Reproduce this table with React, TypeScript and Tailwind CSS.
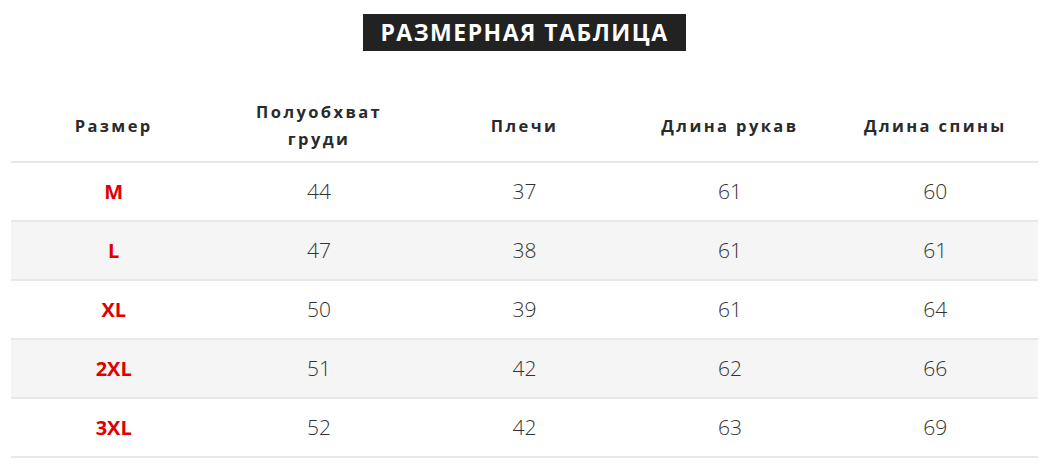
import React from "react";

const rows = [
  ["M", "44", "37", "61", "60"],
  ["L", "47", "38", "61", "61"],
  ["XL", "50", "39", "61", "64"],
  ["2XL", "51", "42", "62", "66"],
  ["3XL", "52", "42", "63", "69"],
];

const headers: React.ReactNode[] = [
  "Размер",
  <>
    Полуобхват
    <br />
    груди
  </>,
  "Плечи",
  "Длина рукав",
  "Длина спины",
];

export default function App() {
  return (
    <div className="w-[1049px] h-[474px] bg-white font-['Open_Sans',sans-serif] text-[#333]">
      <div className="flex justify-center pt-[14px]">
        <div className="bg-[#222222] text-white font-bold text-[23px] leading-[37px] h-[37px] px-[17px] tracking-[1.5px]">
          РАЗМЕРНАЯ ТАБЛИЦА
        </div>
      </div>
      <div className="mx-[11px] mt-[41px]">
        <div className="grid grid-cols-5 h-[71px] items-center border-b-2 border-[#e8e8e8]">
          {headers.map((h, i) => (
            <div
              key={i}
              className="text-center font-bold text-[16.5px] leading-[27px] tracking-[2.4px] whitespace-nowrap text-[#2a2a2a] pb-[3px]"
            >
              {h}
            </div>
          ))}
        </div>
        {rows.map((r, i) => (
          <div
            key={r[0]}
            className={`grid grid-cols-5 h-[59px] items-center border-b-2 border-[#e8e8e8] ${
              i % 2 === 1 ? "bg-[#f5f5f5]" : "bg-white"
            }`}
          >
            {r.map((c, j) => (
              <div
                key={j}
                className={
                  j === 0
                    ? "text-center font-bold text-[20px] text-[#e00000]"
                    : "text-center font-light text-[21px] text-[#333]"
                }
              >
                {c}
              </div>
            ))}
          </div>
        ))}
      </div>
    </div>
  );
}
